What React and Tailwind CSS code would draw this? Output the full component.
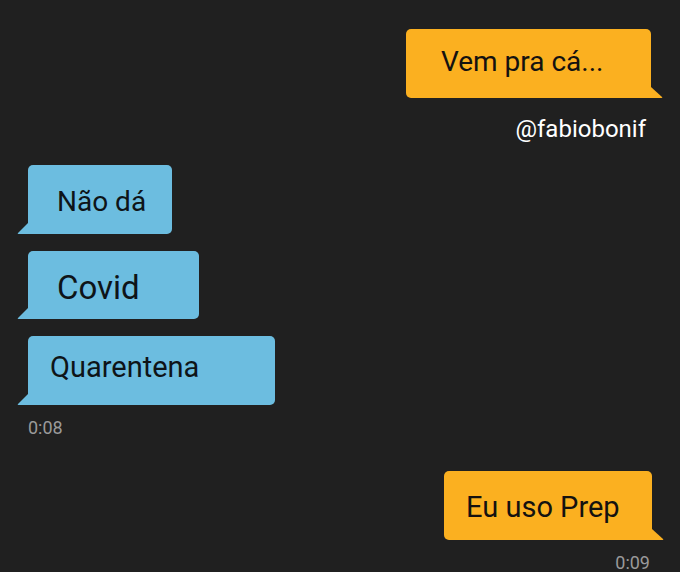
export default function App() {
  const font = { fontFamily: "Roboto, 'Liberation Sans', sans-serif" };
  return (
    <div
      className="w-[680px] h-[572px] overflow-hidden bg-[#202020] flex flex-col"
      style={font}
    >
      {/* Bubble 1 */}
      <div className="self-end mr-[29px] mt-[29px] relative w-[245px] h-[69px] bg-[#fbb020] rounded-[5px] rounded-br-none pl-[35px] pt-[19px]">
        <span className="block text-[28px] leading-none text-[#141210]">Vem pra cá...</span>
        <svg className="absolute right-[-12px] bottom-0" width="12" height="11" viewBox="0 0 12 11">
          <path d="M0 0 L11 10 Q12 11 10.5 11 L0 11 Z" fill="#fbb020" />
        </svg>
      </div>

      <div className="self-end mr-[34px] mt-[19px] text-[24px] leading-none text-white">
        @fabiobonif
      </div>

      {/* Left bubbles */}
      <div className="ml-[28px] mt-[24px] relative w-[144px] h-[69px] bg-[#6cbde0] rounded-[5px] rounded-bl-none pl-[29px] pt-[23px]">
        <span className="block text-[28px] leading-none text-[#0e1418]">Não dá</span>
        <svg className="absolute left-[-11px] bottom-0" width="11" height="11" viewBox="0 0 11 11">
          <path d="M11 0 L1 10 Q0 11 1.5 11 L11 11 Z" fill="#6cbde0" />
        </svg>
      </div>

      <div className="ml-[28px] mt-[17px] relative w-[171px] h-[69px] bg-[#6cbde0] rounded-[5px] rounded-bl-none pl-[29px] pt-[20px]">
        <span className="block text-[33px] leading-none text-[#0e1418]">Covid</span>
        <svg className="absolute left-[-11px] bottom-0" width="11" height="11" viewBox="0 0 11 11">
          <path d="M11 0 L1 10 Q0 11 1.5 11 L11 11 Z" fill="#6cbde0" />
        </svg>
      </div>

      <div className="ml-[28px] mt-[17px] relative w-[247px] h-[69px] bg-[#6cbde0] rounded-[5px] rounded-bl-none pl-[22px] pt-[17px]">
        <span className="block text-[29px] leading-none text-[#0e1418]">Quarentena</span>
        <svg className="absolute left-[-11px] bottom-0" width="11" height="11" viewBox="0 0 11 11">
          <path d="M11 0 L1 10 Q0 11 1.5 11 L11 11 Z" fill="#6cbde0" />
        </svg>
      </div>

      <div className="ml-[28px] mt-[14px] text-[18px] leading-none text-[#9a9a9a]">0:08</div>

      {/* Bubble last */}
      <div className="self-end mr-[28px] mt-[34px] relative w-[208px] h-[69px] bg-[#fbb020] rounded-[5px] rounded-br-none pl-[22px] pt-[22px]">
        <span className="block text-[29px] leading-none text-[#141210]">Eu uso Prep</span>
        <svg className="absolute right-[-12px] bottom-0" width="12" height="11" viewBox="0 0 12 11">
          <path d="M0 0 L11 10 Q12 11 10.5 11 L0 11 Z" fill="#fbb020" />
        </svg>
      </div>

      <div className="self-end mr-[30px] mt-[14px] text-[18px] leading-none text-[#9a9a9a]">0:09</div>
    </div>
  );
}
